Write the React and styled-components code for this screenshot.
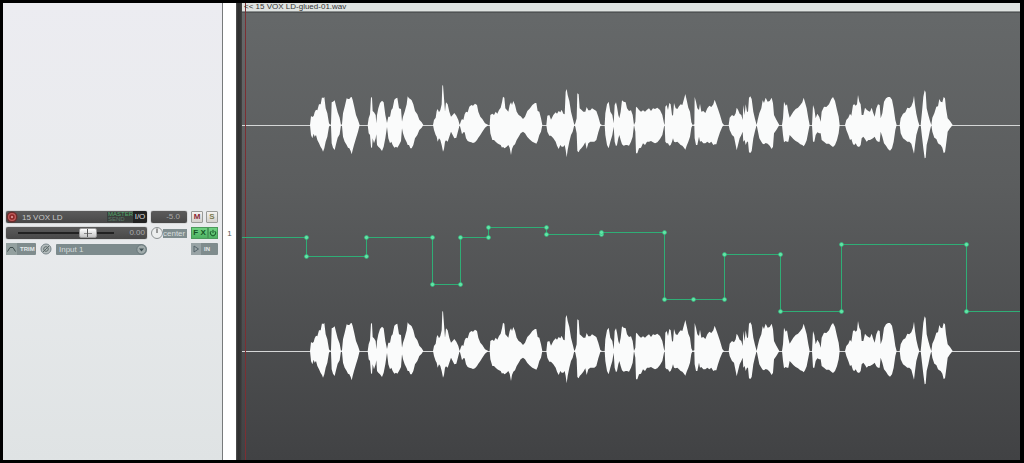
import React from "react";
import styled, { createGlobalStyle } from "styled-components";

const GlobalStyle = createGlobalStyle`
  * { box-sizing: border-box; }
  html, body, #root { height: 100%; }
  body { margin: 0; background: #000; font-family: "Liberation Sans", Arial, sans-serif; }
`;

const Window = styled.div`
  display: flex;
  height: 100vh;
  padding: 3px 4px 3px 3px;
  background: #000;
`;

const TrackPanel = styled.aside`
  display: flex;
  flex-direction: column;
  width: 220px;
  flex: none;
  padding: 208px 4px 0 3px;
  border-right: 1px solid #777a7b;
  background: linear-gradient(#ececf1, #e9ebed 45%, #dfe3e4);
`;

const TrackGrid = styled.div`
  display: grid;
  grid-template-columns: 141px 36px 27px;
  column-gap: 4px;
  row-gap: 4px;
`;

const Bar = styled.div`
  display: flex;
  align-items: center;
  height: 12px;
  border-radius: 2px;
  background: linear-gradient(#5b5b5b, #484848);
  box-shadow: 0 0 1px #333;
  overflow: hidden;
`;

const NameInput = styled.input`
  flex: 1;
  min-width: 0;
  height: 12px;
  margin: 0;
  padding: 0 4px;
  border: 0;
  background: none;
  color: #c8c8c8;
  font: 8px "Liberation Sans", Arial, sans-serif;
`;

const RecordButton = styled.button`
  width: 12px;
  height: 12px;
  padding: 0;
  border: 0;
  background: none;
  svg { display: block; }
`;

const Automation = styled.div`
  width: 26px;
  height: 10px;
  padding-left: 1px;
  background: #3a3f3c;
  color: #55a86c;
  font: 6px/5px "Liberation Sans", Arial, sans-serif;
  span { display: block; color: #5f7a69; }
`;

const IoButton = styled.button`
  width: 14px;
  height: 12px;
  padding: 0;
  border: 0;
  background: #222;
  color: #ddd;
  font: 8px/12px "Liberation Sans", Arial, sans-serif;
`;

const Readout = styled.output`
  flex: 1;
  padding-right: ${(p) => p.$pad || 2}px;
  text-align: right;
  color: #aaa;
  font: 8px/12px "Liberation Sans", Arial, sans-serif;
`;

const Fader = styled.input`
  appearance: none;
  width: 108px;
  height: 12px;
  margin: 0 0 0 12px;
  background: linear-gradient(#222, #222) 0 5px / 96px 2px no-repeat;
  &::-webkit-slider-thumb {
    appearance: none;
    width: 18px;
    height: 10px;
    border-radius: 2px;
    border: 1px solid #999;
    background:
      linear-gradient(#555, #555) 7px 0 / 1px 8px no-repeat,
      linear-gradient(#888, #888) 4px 4px / 8px 1px no-repeat,
      linear-gradient(#fff, #c4c4c4);
  }
`;

const ButtonPair = styled.div`
  display: flex;
  gap: ${(p) => p.$gap || 0}px;
`;

const SmallButton = styled.button`
  flex: 1;
  height: 12px;
  padding: 0;
  border: 1px solid #999b98;
  border-radius: 1px;
  background: linear-gradient(#f4f2ef, #d3d1cc);
  color: ${(p) => p.$color};
  font: bold 8px/10px "Liberation Sans", Arial, sans-serif;
`;

const FxButton = styled.button`
  display: flex;
  align-items: center;
  justify-content: center;
  flex: ${(p) => p.$grow || 1};
  height: 12px;
  padding: 0;
  border: 1px solid #4b9a5b;
  background: linear-gradient(#70d282, #4fb263);
  color: #165526;
  font: bold 8px/10px "Liberation Sans", Arial, sans-serif;
`;

const PanBox = styled.div`
  display: flex;
  align-items: center;
  height: 12px;
`;

const PanKnob = styled.button`
  flex: none;
  width: 12px;
  height: 12px;
  padding: 0;
  border: 0;
  background: none;
  svg { display: block; }
`;

const PanLabel = styled.span`
  flex: 1;
  height: 9px;
  background: #7f8d8f;
  color: #d7dddd;
  font: 8px/9px "Liberation Sans", Arial, sans-serif;
`;

const InputRow = styled.div`
  display: flex;
  align-items: center;
  gap: 4px;
`;

const ToolButton = styled.button`
  display: flex;
  align-items: center;
  justify-content: flex-start;
  gap: 3px;
  width: ${(p) => p.$width}px;
  height: 12px;
  padding: 0;
  border: 0;
  border-radius: ${(p) => (p.$round ? 6 : 1)}px;
  background: ${(p) => (p.$round ? "none" : "#7f8c8d")};
  color: #e4e9e9;
  font: bold 6px/12px "Liberation Sans", Arial, sans-serif;
  svg { flex: none; }
`;

const InputPicker = styled.div`
  display: flex;
  align-items: center;
  flex: 1;
  height: 11px;
  border-radius: 1px 6px 6px 1px;
  background: #7d8b8d;
`;

const InputSelect = styled.select`
  appearance: none;
  flex: 1;
  height: 11px;
  padding: 0 3px;
  border: 0;
  background: none;
  color: #d3dada;
  font: 8px/11px "Liberation Sans", Arial, sans-serif;
`;

const IndexColumn = styled.div`
  width: 13px;
  flex: none;
  padding-top: 226px;
  background: #fff;
  color: #555;
  text-align: center;
  font: 8px/10px "Liberation Sans", Arial, sans-serif;
`;

const Divider = styled.div`
  width: 6px;
  flex: none;
  background: linear-gradient(90deg, #555, #2e2e2e 30%, #343434 70%, #444);
`;

const Arrange = styled.main`
  display: flex;
  flex-direction: column;
  flex: 1;
  min-width: 0;
  background: linear-gradient(#66696a, #5b5d5e 40%, #414244);
`;

const ItemHeader = styled.header`
  height: 8px;
  flex: none;
  padding-left: 2px;
  background: linear-gradient(90deg, transparent 3px, #7c2f33 3px, #7c2f33 4px, transparent 4px), #dfe3e1;
  color: #333;
  font: 8px/8px "Liberation Sans", Arial, sans-serif;
  white-space: nowrap;
`;

const Canvas = styled.svg`
  display: block;
  flex: 1;
  min-height: 0;
  width: 100%;
`;

/* Peaks per phrase: [x, level above, level below], three units to a pixel. */
const PEAKS = [
  [900, [[30,0,0],[33,27,30],[37,24,40],[41,27,26],[44,38,35],[48,46,30],[52,44,45],[57,62,55],[62,62,66],[66,83,72],[69,80,80],[73,84,70],[77,50,50],[82,35,35],[87,5,5],[91,0,0],
    [93,3,3],[95,68,55],[99,70,68],[104,74,75],[108,58,58],[113,38,38],[119,22,28],[123,0,0],
    [126,3,3],[129,35,35],[134,55,50],[140,80,60],[144,78,68],[148,78,70],[152,83,78],[155,84,88],[158,75,75],[162,58,60],[168,30,40],[174,15,20],[179,0,0],
    [203,0,0],[206,20,25],[210,32,30],[213,84,66],[216,82,70],[218,42,40],[222,38,55],[227,30,40],[229,5,28],[231,30,60],[235,50,65],[240,66,70],[246,73,78],[251,68,65],[256,30,40],[261,6,6],[265,25,40],[270,25,55],[274,45,50],[278,50,60],[283,76,68],[288,80,65],[292,82,68],[297,50,60],[303,48,48],[306,10,10],[309,25,25],[314,40,40],[320,62,52],[323,86,60],[327,80,60],[331,78,70],[335,74,70],[340,62,60],[345,42,40],[352,32,30],[358,16,15],[365,8,8],[370,0,0],
    [399,0,0],[402,15,15],[407,22,30],[410,42,35],[413,48,50],[417,38,40],[421,45,45],[425,62,60],[427,118,70],[429,120,80],[432,80,72],[435,40,50],[438,68,46],[443,62,50],[448,40,35],[453,25,20],[458,30,30],[463,36,40],[469,28,38],[475,15,15],[479,0,0],
    [483,12,15],[486,18,28],[490,15,22],[494,32,22],[498,40,40],[503,38,48],[508,55,50],[514,60,52],[519,58,54],[525,64,52],[531,60,45],[535,40,38],[541,25,30],[547,18,20],[555,5,8],[565,0,0]]],
  [1440, [[29,0,0],[31,30,25],[37,34,45],[42,30,45],[47,40,50],[52,34,55],[57,45,58],[62,52,60],[66,68,68],[69,85,65],[73,82,70],[76,50,68],[80,46,65],[85,40,60],[89,60,68],[93,68,90],[96,60,72],[100,72,62],[105,60,58],[110,40,45],[116,30,35],[122,26,25],[129,18,20],[135,25,25],[142,42,36],[150,50,44],[157,60,50],[165,66,54],[169,66,56],[173,42,48],[178,40,30],[183,20,20],[187,0,0],
    [199,0,0],[202,28,20],[208,30,32],[213,16,32],[220,30,40],[227,38,50],[231,34,62],[236,42,72],[241,38,60],[245,46,65],[250,34,65],[254,32,60],[257,100,75],[260,108,97],[263,90,75],[268,72,50],[273,40,30],[278,20,20],[283,0,0],
    [286,5,5],[290,20,25],[292,95,78],[296,92,82],[299,50,75],[304,46,70],[310,40,62],[316,40,52],[320,54,72],[325,44,55],[331,44,50],[336,50,50],[343,46,50],[349,42,45],[355,25,22],[361,3,3],[366,0,0],
    [374,0,0],[376,35,30],[381,62,60],[386,70,70],[391,40,50],[397,30,30],[401,5,5],[404,60,50],[408,68,64],[411,55,60],[415,30,40],[418,20,30],[422,40,45],[426,74,58],[431,70,62],[437,68,60],[441,50,60],[447,42,62],[453,44,50],[458,30,35],[462,0,0],
    [466,10,20],[468,55,85],[472,52,85],[477,45,70],[483,40,68],[489,44,55],[495,40,60],[501,46,50],[507,50,50],[513,42,48],[519,50,52],[525,48,55],[532,52,52],[540,45,42],[547,30,30],[552,5,5]]],
  [1950, [[44,0,0],[46,55,50],[50,60,55],[54,45,55],[58,66,62],[62,62,60],[66,30,50],[69,28,40],[72,66,50],[77,50,52],[82,48,50],[87,56,55],[92,62,60],[97,60,62],[102,78,68],[106,93,74],[110,75,62],[115,52,50],[120,40,35],[124,8,8],[128,0,0],
    [133,2,2],[134,84,40],[138,70,60],[142,50,60],[147,45,35],[150,64,50],[154,40,48],[160,42,55],[166,36,55],[172,50,50],[178,58,55],[184,54,50],[190,62,60],[194,76,58],[199,62,58],[204,48,40],[210,30,22],[217,6,5],[222,0,0],
    [236,0,0],[239,22,15],[246,30,30],[252,26,35],[257,35,60],[260,52,76],[264,46,60],[269,34,40],[274,30,30],[278,15,20],[280,60,50],[284,30,45],[287,62,60],[291,40,50],[294,40,50],[297,82,82],[301,86,84],[305,78,78],[310,40,40],[315,18,18],[320,0,0],
    [323,15,15],[328,35,40],[334,50,50],[338,74,56],[342,66,58],[347,82,54],[353,70,56],[359,72,62],[365,82,72],[369,65,65],[372,30,25],[379,16,15],[388,0,0],
    [396,0,0],[399,20,30],[402,70,52],[407,58,48],[411,62,50],[415,38,50],[419,22,30],[424,30,35],[430,40,42],[437,48,48],[444,52,52],[451,60,58],[457,68,60],[461,82,64],[465,68,58],[470,50,46],[475,20,20],[479,0,0],
    [486,0,0],[489,60,50],[493,48,50],[497,20,30],[502,34,22],[508,24,25],[512,10,25],[515,40,45],[522,55,50],[529,54,56],[537,62,56],[544,78,62],[549,84,66],[555,72,60],[561,45,45],[566,25,25],[569,0,0]]],
  [2400, [[135,0,0],[139,15,15],[145,22,30],[150,34,45],[154,28,42],[159,60,58],[163,62,60],[167,58,55],[171,62,62],[174,90,65],[178,70,65],[182,62,60],[185,30,40],[190,30,35],[195,52,42],[200,46,50],[205,42,45],[210,40,45],[215,52,42],[219,38,40],[224,25,35],[229,50,46],[234,62,50],[239,60,50],[242,20,20],[247,35,35],[252,70,55],[258,80,62],[264,84,72],[270,84,77],[276,76,70],[281,50,50],[286,15,15],[290,0,0],
    [299,0,0],[302,20,25],[309,34,40],[316,38,45],[322,52,50],[328,50,50],[334,56,56],[339,70,75],[342,88,86],[345,60,60],[349,34,30],[354,12,12],[358,0,0],[362,0,0],[366,40,35],[370,85,70],[374,104,100],[377,98,98],[380,50,60],[385,30,40],[390,12,15],[394,0,0],
    [397,22,20],[403,35,38],[409,55,42],[414,56,55],[418,78,58],[422,70,60],[427,68,68],[431,84,84],[435,80,82],[438,50,60],[443,20,20],[450,12,10],[458,0,0]]],
];

const peaks = PEAKS.flatMap(([start, list]) =>
  list.map(([x, up, down]) => [(start + x) / 3 - 242, up / 3, down / 3])
);

const wavePath = (center) => {
  const top = peaks.map(([x, up]) => `${x.toFixed(2)} ${(center - up).toFixed(2)}`);
  const bottom = peaks.map(([x, , down]) => `${x.toFixed(2)} ${(center + down).toFixed(2)}`).reverse();
  return `M${top.join("L")}L${bottom.join("L")}Z`;
};

/* Envelope steps: [x from, x to, level]. */
const STEPS = [
  [0, 64.5, 226.5], [64.5, 124.5, 245.5], [124.5, 190.5, 226.5], [190.5, 218.5, 273.5],
  [218.5, 246.5, 226.5], [246.5, 304.5, 216.5], [304.5, 359.5, 223.5], [359.5, 422.5, 221.5],
  [422.5, 482.5, 288.5], [482.5, 538.5, 243.5], [538.5, 599.5, 300.5], [599.5, 724.5, 233.5],
  [724.5, 778, 300.5],
];
const envelope = "M" + STEPS.map(([a, b, y]) => `${a} ${y}L${b} ${y}`).join("L");
const nodes = [
  ...STEPS.flatMap(([a, b, y]) => [[a, y], [b, y]]).slice(1, -1),
  [451.5, 288.5],
];

function Channel({ center }) {
  return (
    <g>
      <path d={`M0 ${center + 0.5}H778`} stroke="#d5d7d7" strokeWidth="1" />
      <path d={wavePath(center)} fill="#fafbfb" />
    </g>
  );
}

export default function App() {
  return (
    <>
      <GlobalStyle />
      <Window>
        <TrackPanel>
          <TrackGrid>
            <Bar>
              <RecordButton aria-label="Record arm">
                <svg width="12" height="12" viewBox="0 0 12 12">
                  <circle cx="6" cy="6" r="5.5" fill="#6d2c2c" />
                  <circle cx="6" cy="6" r="4" fill="#c25c5c" />
                  <circle cx="6" cy="6" r="2.7" fill="#8b2626" />
                  <circle cx="6" cy="6" r="1.2" fill="#d58a8a" />
                </svg>
              </RecordButton>
              <NameInput aria-label="Track name" defaultValue="15 VOX LD" />
              <Automation>MASTER<span>SEND</span></Automation>
              <IoButton>I/O</IoButton>
            </Bar>
            <Bar><Readout $pad={7}>-5.0</Readout></Bar>
            <ButtonPair $gap={3}>
              <SmallButton $color="#8b2836">M</SmallButton>
              <SmallButton $color="#7b7b50">S</SmallButton>
            </ButtonPair>

            <Bar>
              <Fader type="range" aria-label="Volume" min="0" max="100" defaultValue="68" />
              <Readout>0.00</Readout>
            </Bar>
            <PanBox>
              <PanKnob aria-label="Pan">
                <svg width="12" height="12" viewBox="0 0 12 12">
                  <circle cx="6" cy="6" r="5.5" fill="#eceeee" stroke="#8c9192" />
                  <path d="M6 1.5V6" stroke="#444" />
                </svg>
              </PanKnob>
              <PanLabel>center</PanLabel>
            </PanBox>
            <ButtonPair>
              <FxButton $grow={2}>F X</FxButton>
              <FxButton aria-label="Bypass effects">
                <svg width="8" height="8" viewBox="0 0 8 8" fill="none" stroke="#165526">
                  <path d="M2.3 2A2.7 2.7 0 1 0 5.7 2M4 .8V4" />
                </svg>
              </FxButton>
            </ButtonPair>

            <InputRow>
              <ToolButton $width={30}>
                <svg width="11" height="12" viewBox="0 0 11 12" fill="none">
                  <path d="M0 0H11V12H0Z" fill="#93a09f" />
                  <path d="M1.5 8.5L4 4.5H7L9.5 8.5" stroke="#3f4d4d" />
                </svg>
                TRIM
              </ToolButton>
              <ToolButton $width={12} $round aria-label="Phase">
                <svg width="12" height="12" viewBox="0 0 12 12" fill="none">
                  <circle cx="6" cy="6" r="5" fill="#b4bcbc" stroke="#78858a" />
                  <circle cx="6" cy="6" r="2.3" stroke="#5b6868" />
                  <path d="M3 9L9 3" stroke="#5b6868" />
                </svg>
              </ToolButton>
              <InputPicker>
                <InputSelect aria-label="Input"><option>Input 1</option></InputSelect>
                <svg width="11" height="11" viewBox="0 0 11 11">
                  <circle cx="5.5" cy="5.5" r="4.7" fill="#a0abab" stroke="#67767a" />
                  <path d="M3 4.5H8L5.5 7.5Z" fill="#3f5055" />
                </svg>
              </InputPicker>
            </InputRow>
            <span />
            <ToolButton $width={27}>
              <svg width="10" height="12" viewBox="0 0 10 12">
                <path d="M0 0H10V12H0Z" fill="#98a3a5" />
                <path d="M3 3L7.5 6L3 9Z" fill="none" stroke="#55646a" />
              </svg>
              IN
            </ToolButton>
          </TrackGrid>
        </TrackPanel>
        <IndexColumn>1</IndexColumn>
        <Divider />
        <Arrange>
          <ItemHeader>&lt;&lt; 15 VOX LD-glued-01.wav</ItemHeader>
          <Canvas viewBox="0 0 778 449" preserveAspectRatio="none">
            <path d="M0 .5H778" stroke="#8a8e8e" />
            <path d="M0 1.5H778" stroke="#505354" />
            <Channel center={114} />
            <Channel center={340} />
            <path d="M3.5 0V449" stroke="#7c2f33" />
            <path d={envelope} fill="none" stroke="#2fae76" />
            {nodes.map(([x, y], i) => (
              <circle key={i} cx={x} cy={y} r="2" fill="#62e3a6" stroke="#2fbf80" strokeWidth=".6" />
            ))}
          </Canvas>
        </Arrange>
      </Window>
    </>
  );
}
